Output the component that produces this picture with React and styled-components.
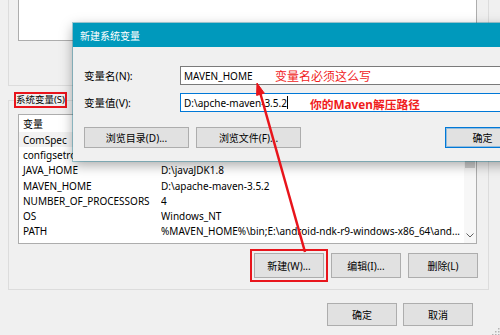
import React from 'react';
import styled, { createGlobalStyle } from 'styled-components';

const GlobalStyle = createGlobalStyle`
  html, body {
    margin: 0;
    padding: 0;
  }
  body {
    width: 500px;
    height: 335px;
    overflow: hidden;
    background: #f0f0f0;
    font-family: "Noto Sans", "Noto Sans CJK SC", sans-serif;
    font-size: 10px;
    color: #000;
  }
`;

const variables = [
  ['ComSpec', '', true],
  ['configsetroot', ''],
  ['JAVA_HOME', 'D:\\javaJDK1.8'],
  ['MAVEN_HOME', 'D:\\apache-maven-3.5.2'],
  ['NUMBER_OF_PROCESSORS', '4'],
  ['OS', 'Windows_NT'],
  ['PATH', '%MAVEN_HOME%\\bin;E:\\android-ndk-r9-windows-x86_64\\and...'],
  ['PATHEXT', '.COM;.EXE;.BAT;.CMD;.VBS;.VBE;.JS;.JSE;.WSF;.WSH;.MSC'],
];

export default function App() {
  return (
    <>
      <GlobalStyle />
      <Screen>
        <UserGroup>
          <UserList />
        </UserGroup>

        <SystemGroup>
          <Legend>系统变量(S)</Legend>
          <VarList>
            <Rows>
              <HeaderRow>
                <span>变量</span>
                <span>值</span>
              </HeaderRow>
              {variables.map(([name, value, selected]) => (
                <Row key={name} selected={selected}>
                  <span>{name}</span>
                  <Value>{value}</Value>
                </Row>
              ))}
            </Rows>
            <Scrollbar>
              <ScrollArrow />
              <Thumb />
              <ScrollSpacer />
              <ScrollArrow bottom>
                <svg width="8" height="5" viewBox="0 0 8 5">
                  <path d="M0.5 0.5 L4 4 L7.5 0.5" fill="none" stroke="#606060" strokeWidth="1" />
                </svg>
              </ScrollArrow>
            </Scrollbar>
          </VarList>
          <GroupButtons>
            <Button marked>新建(W)...</Button>
            <Button>编辑(I)...</Button>
            <Button>删除(L)</Button>
          </GroupButtons>
        </SystemGroup>

        <FooterButtons>
          <Button short>确定</Button>
          <Button short>取消</Button>
        </FooterButtons>

        <Grip>
          <svg width="10" height="10" viewBox="0 0 10 10">
            {[[8, 2], [8, 5], [5, 5], [8, 8], [5, 8], [2, 8]].map(([x, y]) => (
              <rect key={`${x}-${y}`} x={x} y={y} width="1.5" height="1.5" fill="#b4b4b4" />
            ))}
          </svg>
        </Grip>

        <Dialog>
          <TitleBar>新建系统变量</TitleBar>
          <DialogBody>
            <FieldRow>
              <FieldLabel>变量名(N):</FieldLabel>
              <InputBox>
                MAVEN_HOME
                <Annotation left={94}>变量名必须这么写</Annotation>
              </InputBox>
            </FieldRow>
            <FieldRow>
              <FieldLabel>变量值(V):</FieldLabel>
              <InputBox focused>
                D:\apche-maven-3.5.2
                <Caret />
                <Annotation left={129} bold>
                  你的Maven解压路径
                </Annotation>
              </InputBox>
            </FieldRow>
            <DialogButtons>
              <DialogButton>浏览目录(D)...</DialogButton>
              <DialogButton>浏览文件(F)...</DialogButton>
              <DialogButton primary>确定</DialogButton>
            </DialogButtons>
          </DialogBody>
        </Dialog>

        <ArrowLayer width="500" height="335" viewBox="0 0 500 335">
          <line x1="305" y1="252" x2="260.5" y2="94" stroke="#e8141b" strokeWidth="2.5" />
          <polygon points="257,83 264.3,93.2 256.6,95.4" fill="#e8141b" stroke="#e8141b" strokeWidth="1" />
        </ArrowLayer>
      </Screen>
    </>
  );
}

const Screen = styled.div`
  position: relative;
  width: 500px;
  height: 335px;
  overflow: hidden;
  background: #f0f0f0;
`;

const UserGroup = styled.div`
  margin-left: 8px;
  width: 481px;
  height: 86px;
  box-sizing: border-box;
  border: 1px solid #dcdcdc;
  border-top: none;
`;

const UserList = styled.div`
  margin-left: 9px;
  width: 459px;
  height: 41px;
  box-sizing: border-box;
  background: #fff;
  border: 1px solid #adadad;
  border-top: none;
`;

const SystemGroup = styled.fieldset`
  margin: 6px 0 0 8px;
  width: 481px;
  box-sizing: border-box;
  border: 1px solid #dcdcdc;
  padding: 0;
  min-width: 0;
`;

const Legend = styled.legend`
  margin-left: 5px;
  padding: 0;
  height: 16px;
  box-sizing: border-box;
  line-height: 12px;
  font-size: 9.5px;
  border: 2px solid #e8151c;
`;

const VarList = styled.div`
  margin: 6px 0 0 9px;
  width: 459px;
  height: 130px;
  box-sizing: border-box;
  border: 1px solid #adadad;
  background: #fff;
  display: grid;
  grid-template-columns: 1fr 12px;
  overflow: hidden;
`;

const Rows = styled.div`
  overflow: hidden;
`;

const HeaderRow = styled.div`
  display: grid;
  grid-template-columns: 138px 1fr;
  height: 17px;
  align-items: center;
  padding-left: 4px;
`;

const Row = styled.div`
  display: grid;
  grid-template-columns: 138px 1fr;
  height: 15.3px;
  align-items: center;
  padding-left: 4px;
  white-space: nowrap;
  overflow: hidden;
  background: ${(props) => (props.selected ? '#f2f2f2' : 'transparent')};
`;

const Value = styled.span`
  overflow: hidden;
`;

const Scrollbar = styled.div`
  display: flex;
  flex-direction: column;
  background: #f7f7f7;
`;

const ScrollArrow = styled.div`
  height: ${(props) => (props.bottom ? '16px' : '12px')};
  display: flex;
  align-items: center;
  justify-content: center;
`;

const Thumb = styled.div`
  height: 41px;
  margin: 0 1px;
  background: #cdcdcd;
`;

const ScrollSpacer = styled.div`
  flex: 1;
`;

const GroupButtons = styled.div`
  display: flex;
  justify-content: flex-end;
  gap: 7px;
  margin: 9px 10px 0 0;
  padding-bottom: 11px;
`;

const Button = styled.button`
  width: 70px;
  height: ${(props) => (props.short ? '23px' : '25px')};
  padding: 0;
  border: 1px solid #adadad;
  background: #e1e1e1;
  font-family: inherit;
  font-size: 10px;
  color: #000;
  outline: ${(props) => (props.marked ? '2px solid #e8151c' : 'none')};
  outline-offset: 2px;
`;

const FooterButtons = styled.div`
  display: flex;
  justify-content: flex-end;
  gap: 6px;
  margin-top: 13px;
  padding-right: 27px;
`;

const Grip = styled.div`
  position: absolute;
  right: 0;
  bottom: 0;
  width: 10px;
  height: 10px;
`;

const Dialog = styled.div`
  position: absolute;
  left: 73px;
  top: 23px;
  width: 460px;
  background: #f0f0f0;
  box-shadow: 0 0 0 1px rgba(0, 120, 150, 0.35), 0 4px 12px rgba(0, 0, 0, 0.35);
`;

const TitleBar = styled.div`
  height: 24px;
  display: flex;
  align-items: center;
  padding-left: 7px;
  background: #0099bc;
  color: #fff;
`;

const DialogBody = styled.div`
  padding: 19px 13px 13px 11px;
`;

const FieldRow = styled.div`
  display: flex;
  align-items: center;
  height: 19px;

  & + & {
    margin-top: 8px;
  }
`;

const FieldLabel = styled.div`
  width: 96px;
  font-size: 10.5px;
`;

const InputBox = styled.div`
  position: relative;
  width: 340px;
  height: 19px;
  box-sizing: border-box;
  padding-left: 3px;
  display: flex;
  align-items: center;
  background: #fff;
  border: 1px solid ${(props) => (props.focused ? '#0078d7' : '#7a7a7a')};
  white-space: nowrap;
`;

const Caret = styled.span`
  display: inline-block;
  width: 1px;
  height: 13px;
  background: #000;
`;

const Annotation = styled.span`
  position: absolute;
  left: ${(props) => props.left}px;
  top: 50%;
  transform: translateY(-50%);
  color: #f01c1c;
  font-size: ${(props) => (props.bold ? '11.75px' : '12px')};
  font-weight: ${(props) => (props.bold ? 700 : 400)};
`;

const DialogButtons = styled.div`
  display: flex;
  gap: 7px;
  margin-top: 15px;
`;

const DialogButton = styled.button`
  width: ${(props) => (props.primary ? '75px' : '105px')};
  height: 21px;
  padding: 0;
  margin-left: ${(props) => (props.primary ? 'auto' : '0')};
  border: 1px solid ${(props) => (props.primary ? '#0078d7' : '#adadad')};
  box-shadow: ${(props) => (props.primary ? 'inset 0 0 0 1px rgba(0, 120, 215, 0.35)' : 'none')};
  background: #e1e1e1;
  font-family: inherit;
  font-size: 10px;
  color: #000;
`;

const ArrowLayer = styled.svg`
  position: absolute;
  left: 0;
  top: 0;
  pointer-events: none;
`;
